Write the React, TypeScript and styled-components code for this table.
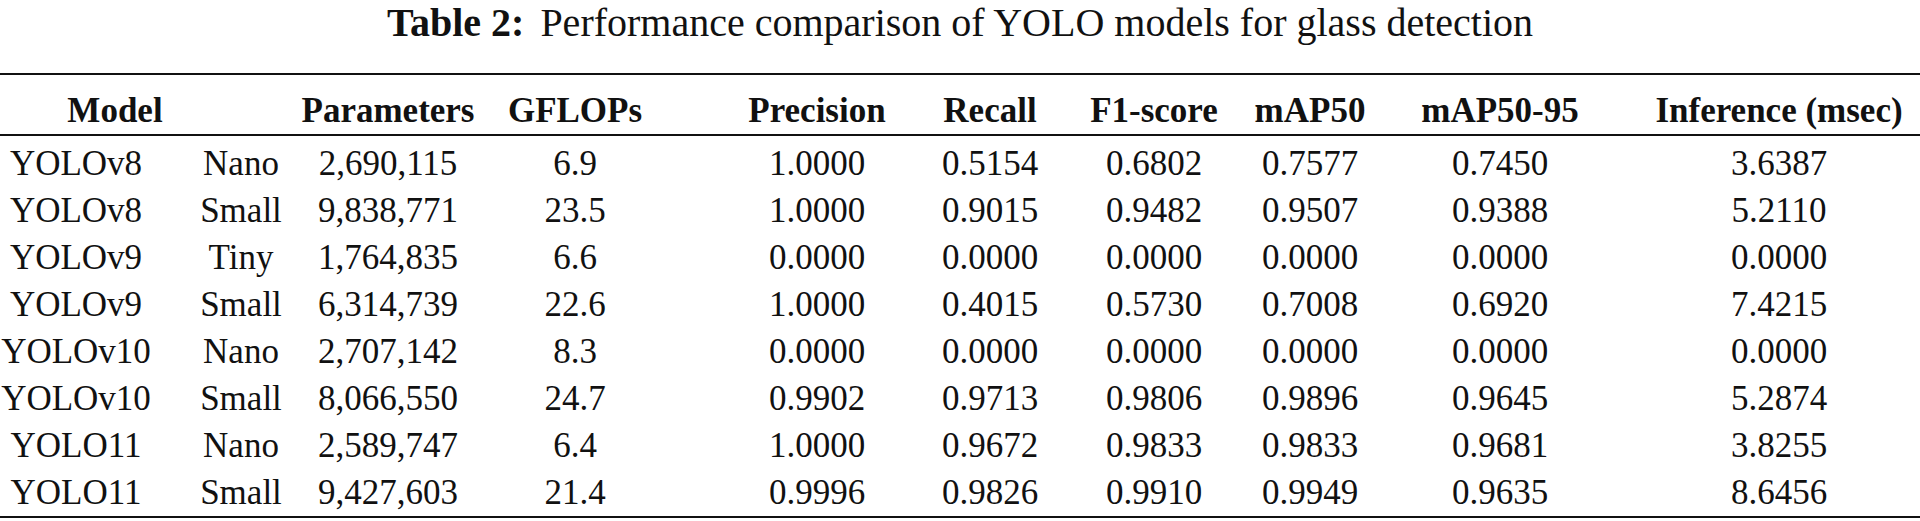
import styled, { createGlobalStyle } from 'styled-components';

const rows = [
  ['YOLOv8', 'Nano', '2,690,115', '6.9', '1.0000', '0.5154', '0.6802', '0.7577', '0.7450', '3.6387'],
  ['YOLOv8', 'Small', '9,838,771', '23.5', '1.0000', '0.9015', '0.9482', '0.9507', '0.9388', '5.2110'],
  ['YOLOv9', 'Tiny', '1,764,835', '6.6', '0.0000', '0.0000', '0.0000', '0.0000', '0.0000', '0.0000'],
  ['YOLOv9', 'Small', '6,314,739', '22.6', '1.0000', '0.4015', '0.5730', '0.7008', '0.6920', '7.4215'],
  ['YOLOv10', 'Nano', '2,707,142', '8.3', '0.0000', '0.0000', '0.0000', '0.0000', '0.0000', '0.0000'],
  ['YOLOv10', 'Small', '8,066,550', '24.7', '0.9902', '0.9713', '0.9806', '0.9896', '0.9645', '5.2874'],
  ['YOLO11', 'Nano', '2,589,747', '6.4', '1.0000', '0.9672', '0.9833', '0.9833', '0.9681', '3.8255'],
  ['YOLO11', 'Small', '9,427,603', '21.4', '0.9996', '0.9826', '0.9910', '0.9949', '0.9635', '8.6456'],
];

const headers = ['Parameters', 'GFLOPs', 'Precision', 'Recall', 'F1-score', 'mAP50', 'mAP50-95', 'Inference (msec)'];

const App = () => {
  return (
    <Page>
      <GlobalStyle />
      <Caption>
        <CaptionLabel>Table 2:</CaptionLabel>
        Performance comparison of YOLO models for glass detection
      </Caption>
      <Table>
        <HeaderRow>
          <ModelHead>Model</ModelHead>
          {headers.map((h) => (
            <Cell key={h}>{h}</Cell>
          ))}
        </HeaderRow>
        <Body>
          {rows.map((r, i) => (
            <Row key={i}>
              {r.map((v, j) => (
                <Cell key={j}>{v}</Cell>
              ))}
            </Row>
          ))}
        </Body>
      </Table>
    </Page>
  );
};

export default App;

const GlobalStyle = createGlobalStyle`
  html, body {
    margin: 0;
    padding: 0;
    background: #ffffff;
  }
  body {
    font-family: "Liberation Serif", "Times New Roman", "DejaVu Serif", serif;
    color: #111111;
  }
`;

// column tracks, each cell is centred in its track
const columns = '152px 178px 116px 258px 226px 120px 208px 104px 276px 282px';

const Page = styled.div`
  width: 1920px;
  height: 521px;
  overflow: hidden;
  font-family: "Liberation Serif", "Times New Roman", "DejaVu Serif", serif;
`;

const Caption = styled.div`
  font-size: 40px;
  line-height: 45px;
  text-align: center;
  white-space: nowrap;
`;

const CaptionLabel = styled.span`
  font-weight: 700;
  margin-right: 16px;
`;

const Table = styled.div`
  margin-top: 28px;
  border-top: 2px solid #111111;
  font-size: 35px;
`;

const Row = styled.div`
  display: grid;
  grid-template-columns: ${columns};
  height: 47px;
  line-height: 47px;
`;

const HeaderRow = styled(Row)`
  font-weight: 700;
  height: 61px;
  padding-top: 12px;
  box-sizing: border-box;
  border-bottom: 2px solid #111111;
`;

const Body = styled.div`
  padding-top: 4px;
  border-bottom: 2px solid #111111;
`;

const Cell = styled.div`
  display: flex;
  justify-content: center;
  white-space: nowrap;
  min-width: 0;
`;

const ModelHead = styled(Cell)`
  grid-column: span 2;
  padding-right: 100px;
`;
